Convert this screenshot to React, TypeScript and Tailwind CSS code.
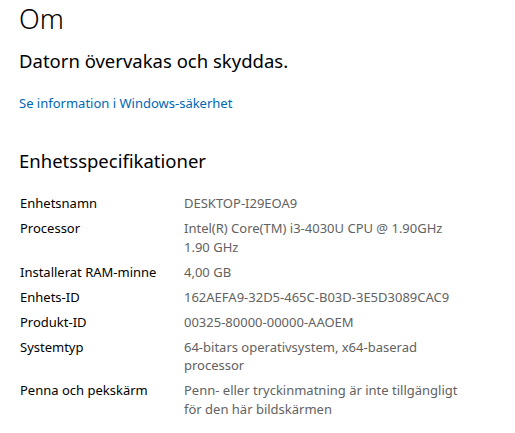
const SPECS: { label: string; value: string[] }[] = [
  { label: "Enhetsnamn", value: ["DESKTOP-I29EOA9"] },
  { label: "Processor", value: ["Intel(R) Core(TM) i3-4030U CPU @ 1.90GHz", "1.90 GHz"] },
  { label: "Installerat RAM-minne", value: ["4,00 GB"] },
  { label: "Enhets-ID", value: ["162AEFA9-32D5-465C-B03D-3E5D3089CAC9"] },
  { label: "Produkt-ID", value: ["00325-80000-00000-AAOEM"] },
  { label: "Systemtyp", value: ["64-bitars operativsystem, x64-baserad", "processor"] },
  { label: "Penna och pekskärm", value: ["Penn- eller tryckinmatning är inte tillgängligt", "för den här bildskärmen"] },
]

export default function App() {
  return (
    <div className="h-[433px] w-[515px] overflow-hidden bg-white pl-[19px] font-['Noto_Sans',sans-serif] text-black">
      <h1 className="pt-[1px] text-[27px] font-light leading-[36px]">Om</h1>
      <p className="mt-[11px] text-[18.5px] leading-[26px]">Datorn övervakas och skyddas.</p>
      <a className="mt-[20px] block text-[13px] leading-[18px] text-[#0067b8]">Se information i Windows-säkerhet</a>
      <h2 className="mt-[36px] text-[18.5px] leading-[26px]">Enhetsspecifikationer</h2>
      <div className="mt-[20px] flex flex-col gap-[6.5px] text-[13px] leading-[18.5px]">
        {SPECS.map((row) => (
          <div key={row.label} className="flex">
            <div className="w-[165px] shrink-0 pl-[1px]">{row.label}</div>
            <div className="text-[#626262]">
              {row.value.map((line) => (
                <div key={line}>{line}</div>
              ))}
            </div>
          </div>
        ))}
      </div>
    </div>
  )
}
